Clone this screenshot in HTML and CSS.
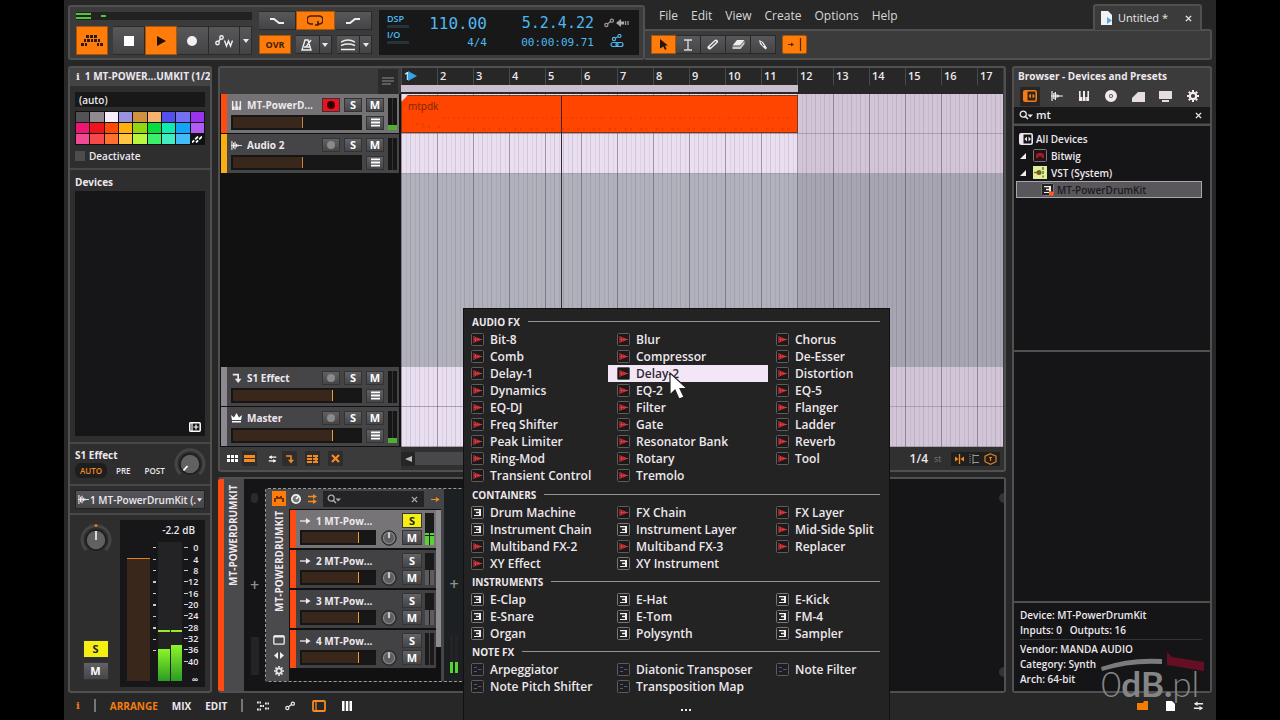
FILE: index.html
```html
<!DOCTYPE html>
<html lang="en">
<head>
<meta charset="utf-8">
<title>Untitled *</title>
<link rel="stylesheet" href="styles.css">
</head>
<body>
<svg class="defs" aria-hidden="true">
  <symbol id="fx" viewBox="0 0 13 13"><rect x=".5" y=".5" width="12" height="12" rx="1" fill="#1b1919" stroke="#5d5d5d"/><path d="M3 3v7M4.5 4v5M6 4.2v4.6M7.3 5v3M8.6 5.6v1.8" stroke="#d8343a" stroke-width="1.1"/><path d="M3 6.5h8" stroke="#d8343a"/></symbol>
  <symbol id="ins" viewBox="0 0 13 13"><rect x=".5" y=".5" width="12" height="12" rx="1" fill="#222" stroke="#777"/><path d="M3 3h7v7H3V8.9h5V7.3H5V5.8h3V4.2H3z" fill="#f3edf3"/></symbol>
  <symbol id="note" viewBox="0 0 13 13"><rect x=".5" y=".5" width="12" height="12" rx="1" fill="#1e1e20" stroke="#5c5c60"/><path d="M3 4.5h3M3 8.5h3M7 6.5h3.5" stroke="#55597a" stroke-width="1.2"/></symbol>
  <symbol id="wave" viewBox="0 0 12 12"><path d="M1 1v10M2.8 3v6M4.4 2v8M6 4.2v3.6M7.6 5v2" stroke="currentColor" stroke-width="1.2"/><path d="M0 6h12" stroke="currentColor"/></symbol>
  <symbol id="keys" viewBox="0 0 12 12"><path d="M1 1h1.6v6H4v4H1zM5 1v6H4.6v4h3V7H7V1zM9.4 1H11v10H8.2V7h1.2z" fill="currentColor"/></symbol>
  <symbol id="gear" viewBox="0 0 12 12"><circle cx="6" cy="6" r="3.2" fill="none" stroke="currentColor" stroke-width="2.2"/><path d="M6 0v2M6 10v2M0 6h2M10 6h2M1.8 1.8l1.4 1.4M8.8 8.8l1.4 1.4M10.2 1.8L8.8 3.2M3.2 8.8l-1.4 1.4" stroke="currentColor" stroke-width="2"/></symbol>
  <symbol id="search" viewBox="0 0 14 10"><circle cx="4.2" cy="4.2" r="3" fill="none" stroke="currentColor" stroke-width="1.3"/><path d="M6.2 6.2L9 9" stroke="currentColor" stroke-width="1.5"/><path d="M8.5 4.5H14L11.2 7.5z" fill="currentColor"/></symbol>
  <symbol id="x" viewBox="0 0 8 8"><path d="M1 1l6 6M7 1L1 7" stroke="currentColor" stroke-width="1.6"/></symbol>
  <symbol id="down" viewBox="0 0 6 4"><path d="M0 0h6L3 4z" fill="currentColor"/></symbol>
  <symbol id="list" viewBox="0 0 10 10"><path d="M0 1.5h10M0 5h10M0 8.5h10" stroke="currentColor" stroke-width="2"/></symbol>
  <symbol id="send" viewBox="0 0 12 12"><path d="M1.5 2H8v7" fill="none" stroke="currentColor" stroke-width="2"/><path d="M4 7h8l-4 5z" fill="currentColor"/></symbol>
  <symbol id="arrow" viewBox="0 0 12 8"><path d="M0 4h8" stroke="currentColor" stroke-width="1.4"/><path d="M6.500 .8L11.500 4l-5 3.200z" fill="currentColor"/></symbol>
  <symbol id="swap" viewBox="0 0 12 10"><path d="M2 2.500h9M1 7.500h9" stroke="currentColor" stroke-width="1.600"/><path d="M5 0v5L1 2.500zM7 5v5l4-2.500z" fill="currentColor"/></symbol>
  <symbol id="link" viewBox="0 0 14 12"><circle cx="3" cy="8.500" r="2" fill="none" stroke="currentColor" stroke-width="1.600"/><circle cx="10" cy="3" r="2" fill="none" stroke="currentColor" stroke-width="1.600"/><path d="M4.500 7l4-2.800" stroke="currentColor" stroke-width="1.600"/></symbol>
  <symbol id="device" viewBox="0 0 14 12"><rect x=".8" y=".8" width="12.400" height="10.400" rx="1.500" fill="none" stroke="currentColor" stroke-width="1.600"/><path d="M1 1h3.500v10H1zM5.500 6L8 3.500v5zM12 6L9.500 3.500v5z" fill="currentColor"/></symbol>
  <symbol id="knob" viewBox="0 0 32 32"><path d="M6.500 27a14 14 0 1 1 19 0" fill="none" stroke="#454545" stroke-width="3"/><circle cx="16" cy="17" r="10" fill="#606163" stroke="#1d1d1d" stroke-width="1.500"/></symbol>
  <symbol id="pan" viewBox="0 0 16 16"><circle cx="8" cy="8" r="7.200" fill="#5e5d60" stroke="#1c1c1c"/><circle cx="8" cy="8" r="5.500" fill="none" stroke="#8a898c"/><path d="M8 2.500V8" stroke="#fff" stroke-width="1.400"/></symbol>
</svg>

<div class="app">
<header class="top">
  <section class="panel transport" aria-label="Transport">
    <div class="play-side">
      <div class="master-level"><i></i><b></b></div>
      <div class="btns big">
        <button class="on logo" aria-label="Engine"><svg width="22" height="12" viewBox="0 0 22 12" fill="#2a1a08"><path d="M5 0h3v3H5zM9 0h3v3H9zM13 0h3v3h-3zM3 4h2v3H3zM6 4h3v3H6zM10 4h2v3h-2zM13 4h3v3h-3zM17 4h2v3h-2zM0 8h3v3H0zM4 8h2v3H4zM16 8h2v3h-2zM19 8h3v3h-3z"/></svg></button>
        <button aria-label="Stop"><svg width="10" height="10"><path d="M0 0h10v10H0z" fill="#fff"/></svg></button>
        <button class="on" aria-label="Play"><svg width="10" height="10"><path d="M1 0l9 5-9 5z" fill="#1e1206"/></svg></button>
        <button aria-label="Record"><svg width="10" height="10"><circle cx="5" cy="5" r="5" fill="#f3eef3"/></svg></button>
        <button aria-label="Write automation"><svg width="18" height="14" viewBox="0 0 18 14" fill="none" stroke="#f3eef3" stroke-width="1.400"><circle cx="2.500" cy="9" r="1.700"/><circle cx="6.500" cy="3.500" r="1.700"/><path d="M3.500 7.500l2-2.500M9.500 6.500l2 5.500 2-5 2 5 2-5.500"/></svg></button>
        <button class="dd" aria-label="Automation options"><svg width="6" height="4"><use href="#down"/></svg></button>
      </div>
    </div>
    <div class="loop-side">
      <div class="btns">
        <button aria-label="Punch in"><svg width="14" height="6" fill="none" stroke="#eee" stroke-width="2"><path d="M0 1h4l5 4h5"/></svg></button>
        <button class="on" aria-label="Loop"><svg width="16" height="11" viewBox="0 0 16 11" fill="none" stroke="#3a2208" stroke-width="1.600"><path d="M6 9H4a3.500 3.500 0 0 1 0-8h8a3.500 3.500 0 0 1 0 8h-2M11 6v4H8"/></svg></button>
        <button aria-label="Punch out"><svg width="14" height="6" fill="none" stroke="#eee" stroke-width="2"><path d="M0 5h4l5-4h5"/></svg></button>
      </div>
      <div class="btns split">
        <button class="on ovr">OVR</button>
        <button aria-label="Metronome"><svg width="12" height="12" viewBox="0 0 12 12" fill="none" stroke="#eee" stroke-width="1.400"><path d="M4 1h3l3 10H1zM3 8h6M5 8l5-7"/></svg></button>
        <button class="dd" aria-label="Metronome options"><svg width="6" height="4"><use href="#down"/></svg></button>
        <button aria-label="Groove"><svg width="14" height="12" viewBox="0 0 14 12" fill="none" stroke="#eee" stroke-width="1.500"><path d="M0 3q7-4 14 0M0 6.500q7-3 14 0M0 10.500h14"/></svg></button>
        <button class="dd" aria-label="Groove options"><svg width="6" height="4"><use href="#down"/></svg></button>
      </div>
    </div>
    <div class="display">
      <div class="dsp"><span>DSP</span><i></i><span>I/O</span><i></i></div>
      <div class="nums"><span class="tempo">110.00</span><span>4/4</span></div>
      <div class="nums"><span class="pos">5.2.4.22</span><span>00:00:09.71</span></div>
      <div class="flags">
        <svg width="26" height="12" viewBox="0 0 26 12" color="#9a9a9a"><use href="#link" width="11" height="12"/><path d="M12 6l5-4v2.500h3v3h-3V10z" fill="#aaa"/><path d="M21.500 4v4M24 4v4" stroke="#999" stroke-width="1.300"/></svg>
        <svg width="14" height="14" viewBox="0 0 14 14" fill="none" stroke="#4fb8f0" stroke-width="1.200"><circle cx="4" cy="5" r="1.600"/><circle cx="9.500" cy="2" r="1.500"/><path d="M5.500 4l2.500-1.300"/><rect x="1" y="8.500" width="7" height="4" rx="2"/><rect x="6" y="8.500" width="7" height="4" rx="2"/></svg>
      </div>
    </div>
  </section>
  <div class="top-right">
    <div class="menu-row">
      <nav class="menubar"><button>File</button><button>Edit</button><button>View</button><button>Create</button><button>Options</button><button>Help</button></nav>
      <div class="tab"><svg width="13" height="14" viewBox="0 0 13 14"><path d="M1 0h7l4 4v10H1z" fill="#f1f3f8"/><path d="M7 6l5 3.500L7 13z" fill="#58a9dd"/></svg><span>Untitled *</span><button aria-label="Close tab"><svg width="7" height="7"><use href="#x"/></svg></button></div>
    </div>
    <div class="tools">
      <div class="btns">
        <button class="on" aria-label="Pointer"><svg width="8" height="11"><path d="M0 0l8 6.500H5L6.500 10 5 11 3.300 7.500 0 9.500z" fill="#22150a"/></svg></button>
        <button aria-label="Time selection"><svg width="8" height="12" fill="none" stroke="#ddd" stroke-width="1.300"><path d="M0 1h8M0 11h8M4 1v10"/></svg></button>
        <button aria-label="Pencil"><svg width="12" height="11" viewBox="0 0 12 11"><path d="M2.500 8.500L9 2.500" stroke="#eee" stroke-width="4" stroke-linecap="round"/><path d="M3 8l6-5.500" stroke="#555" stroke-width="1.300"/></svg></button>
        <button aria-label="Eraser"><svg width="13" height="11" viewBox="0 0 13 11"><path d="M5 1h7.500L8 6.500H.5z" fill="#eee"/><path d="M.5 7.500H8l4.500-5.500v3L8.500 10h-8z" fill="#c9c9c9"/></svg></button>
        <button aria-label="Knife"><svg width="10" height="11" viewBox="0 0 10 11"><path d="M1 1l4 2 4 6-1.500 1.500L2 5z" fill="#eee"/><path d="M3 3l2.500 4" stroke="#444"/></svg></button>
      </div>
      <button class="on follow" aria-label="Follow playback"><svg width="16" height="13" viewBox="0 0 16 13"><path d="M1 6.500h4M13.500 0v13" stroke="#4a2808" stroke-width="1.200"/><path d="M4 4.500l3 2-3 2z" fill="#4a2808"/></svg></button>
    </div>
  </div>
</header>

<main class="work">
  <aside class="panel inspector">
    <h2><b class="info">i</b>1 MT-POWER...UMKIT (1/2</h2>
    <section class="ident">
      <input class="name" type="text" value="(auto)" aria-label="Track name">
      <div class="palette">
        <i class="c1"></i><i class="c2"></i><i class="c3"></i><i class="c4"></i><i class="c5"></i><i class="c6"></i><i class="c7"></i><i class="c8"></i><i class="c9"></i>
        <i class="c10"></i><i class="c11"></i><i class="c12"></i><i class="c13"></i><i class="c14"></i><i class="c15"></i><i class="c16"></i><i class="c17"></i><i class="c18"></i>
        <i class="c19"></i><i class="c20"></i><i class="c21"></i><i class="c22"></i><i class="c23"></i><i class="c24"></i><i class="c25"></i><i class="c26"></i><i class="c27"><svg width="10" height="7" viewBox="0 0 10 7"><path d="M0 6.500L6 .5M4 6.500L10 .5" stroke="#fff" stroke-width="1.800" stroke-dasharray="3 1.500 6"/></svg></i>
      </div>
      <label class="deact"><input type="checkbox">Deactivate</label>
    </section>
    <section class="devs">
      <h3>Devices</h3>
      <div class="well"><button aria-label="Add device"><svg width="12" height="10" viewBox="0 0 12 10"><rect x=".8" y=".8" width="10.400" height="8.400" rx="1" fill="none" stroke="#fff" stroke-width="1.500"/><path d="M1 1h2v8H1zM4.500 5h5M7 2.500v5" stroke="#fff" stroke-width="1.200"/></svg></button></div>
    </section>
    <section class="sends">
      <div><h3>S1 Effect</h3><div class="modes"><button class="sel">AUTO</button><button>PRE</button><button>POST</button></div></div>
      <svg width="32" height="32" viewBox="0 0 32 32"><use href="#knob"/><path d="M9.500 23.500l4-4.500" stroke="#fff" stroke-width="1.800"/></svg>
    </section>
    <section class="route"><button><svg width="11" height="11"><use href="#wave"/></svg><span>1 MT-PowerDrumKit (.</span><svg width="5" height="4"><use href="#down"/></svg></button></section>
    <section class="mix">
      <div class="strip">
        <svg width="32" height="32" viewBox="0 0 32 32"><use href="#knob"/><path d="M16 8v9" stroke="#fff" stroke-width="1.500"/><circle cx="16" cy="2.500" r="1.500" fill="#d67a2c"/></svg>
        <div class="sm"><button class="solo">S</button><button>M</button></div>
      </div>
      <div class="meterbox">
        <span class="db">-2.2 dB</span>
        <div class="cols">
          <div class="fader"></div>
          <div class="ticks"></div>
          <div class="lv"><i class="l"></i><i class="r"></i></div>
          <ul><li>0</li><li>4</li><li>8</li><li>12</li><li>16</li><li>20</li><li>24</li><li>28</li><li>32</li><li>36</li><li>40</li><li class="inf">∞</li></ul>
        </div>
      </div>
    </section>
  </aside>

  <div class="centre">
    <section class="panel arranger">
      <div class="corner"><button aria-label="Track list options"><svg width="12" height="12" viewBox="0 0 12 12"><path d="M0 2h12M0 5h12M0 8h9" stroke="#5c5c5c" stroke-width="2"/></svg></button></div>
      <div class="ruler">
        <div class="nos"><span>1</span><span>2</span><span>3</span><span>4</span><span>5</span><span>6</span><span>7</span><span>8</span><span>9</span><span>10</span><span>11</span><span>12</span><span>13</span><span>14</span><span>15</span><span>16</span><span>17</span></div>
        <div class="loopbar"></div>
        <svg class="startmark" width="9" height="10"><path d="M0 0l9 5-9 5z" fill="#35a3e6"/></svg>
      </div>
      <div class="heads">
        <article class="track t-inst">
          <div class="tname"><svg width="11" height="11"><use href="#keys"/></svg><span>MT-PowerD...</span></div>
          <button class="arm live" aria-label="Arm"><i></i></button><button>S</button><button>M</button>
          <div class="vol v52"></div><button class="lst" aria-label="Options"><svg width="9" height="9"><use href="#list"/></svg></button><div class="lvl hot"></div>
        </article>
        <article class="track t-audio">
          <div class="tname"><svg width="11" height="11"><use href="#wave"/></svg><span>Audio 2</span></div>
          <button class="arm" aria-label="Arm"><i></i></button><button>S</button><button>M</button>
          <div class="vol v52"></div><button class="lst" aria-label="Options"><svg width="9" height="9"><use href="#list"/></svg></button><div class="lvl"></div>
        </article>
        <div class="void"></div>
        <article class="track t-bus">
          <div class="tname"><svg width="11" height="10"><use href="#send"/></svg><span>S1 Effect</span></div>
          <button class="arm" aria-label="Arm"><i></i></button><button>S</button><button>M</button>
          <div class="vol v77"></div><button class="lst" aria-label="Options"><svg width="9" height="9"><use href="#list"/></svg></button><div class="lvl"></div>
        </article>
        <article class="track t-bus">
          <div class="tname"><svg width="11" height="10" viewBox="0 0 11 10"><path d="M0 2l3 2.500L5.500 0 8 4.500 11 2l-1 5H1zM1 8h9v1.500H1z" fill="#fff"/></svg><span>Master</span></div>
          <button class="arm" aria-label="Arm"><i></i></button><button>S</button><button>M</button>
          <div class="vol v77"></div><button class="lst" aria-label="Options"><svg width="9" height="9"><use href="#list"/></svg></button><div class="lvl hot"></div>
        </article>
      </div>
      <div class="lanes">
        <div class="lane"><div class="clip"><span>mtpdk</span><svg viewBox="0 0 396 14" preserveAspectRatio="none"><path d="M36 2H396" stroke="#d03c06" stroke-dasharray="2 3 1 4"/><path d="M8 8h10M14 11h20M60 13h330" stroke="#d03c06" stroke-dasharray="3 3 2 8"/></svg></div></div>
        <div class="lane"></div>
        <div class="gap"></div>
        <div class="lane"></div>
        <div class="lane"></div>
        <div class="playhead"></div>
      </div>
      <div class="views">
        <button class="plain" aria-label="Clip launcher"><svg width="11" height="7" viewBox="0 0 11 7"><path d="M0 0h3v3H0zM4 0h3v3H4zM8 0h3v3H8zM0 4h3v3H0zM4 4h3v3H4zM8 4h3v3H8z" fill="#fff"/></svg></button>
        <button aria-label="Arranger timeline"><svg width="11" height="8"><path d="M0 0h11v3H0zM0 4h11v3H0z" fill="#f58a1f"/></svg></button>
        <button class="plain gapl" aria-label="Input output"><svg width="9" height="8"><use href="#swap"/></svg></button>
        <button aria-label="Effect tracks"><svg width="9" height="10"><use href="#send"/></svg></button>
        <button class="gapl" aria-label="Track height"><svg width="11" height="8" viewBox="0 0 11 8"><path d="M0 1h5M0 4h5M0 7h5M6 1h5M6 4h5M6 7h5M9 0v8" stroke="#f58a1f" stroke-width="1.800"/></svg></button>
        <button class="gapl" aria-label="Deactivated tracks"><svg width="9" height="9" viewBox="0 0 9 9"><path d="M1 1l7 7M8 1L1 8" stroke="#f58a1f" stroke-width="2.200"/></svg></button>
      </div>
      <div class="scroller">
        <button aria-label="Scroll left"><svg width="7" height="6"><path d="M7 0v6L0 3z" fill="#bbb"/></svg></button><i></i>
        <span class="snap">1/4</span><em>st</em>
        <div class="snapset"><svg width="11" height="10" viewBox="0 0 11 10"><path d="M5.500 0v10" stroke="#f58a1f" stroke-width="1.300"/><path d="M1 2.500v5L4.500 5zM10 2.500v5L6.500 5z" fill="#f58a1f"/></svg><svg width="11" height="10" viewBox="0 0 11 10" fill="none" stroke="#999"><path d="M1 0v10" stroke-dasharray="1 1"/><path d="M4 0v10M10 1.500H4M10 8.500H4"/></svg><svg width="13" height="12" viewBox="0 0 13 12" fill="none" stroke="#e27e22" stroke-width="1.200"><path d="M6.500 .7l5.500 2.500v5.500l-5.500 2.600L1 8.700V3.200zM5 4.500h3M6.500 4.500v3.500"/></svg></div>
      </div>
    </section>

    <section class="panel devices">
      <h2 class="vert outer">MT-POWERDRUMKIT</h2>
      <div class="rack">
        <div class="slot"><i class="dot"></i><button class="plus" aria-label="Insert device">+</button><div class="io"></div></div>
        <article class="device">
          <div class="side">
            <button class="on" aria-label="Device on"><svg width="10" height="6" viewBox="0 0 10 6" fill="none" stroke="#3a1d04" stroke-width="1.500"><path d="M1 6V2M3 3V0M5 3V1M7 3V0M9 6V2"/></svg></button>
            <h3 class="vert">MT-POWERDRUMKIT</h3>
            <svg width="12" height="10" viewBox="0 0 12 10"><rect x=".8" y=".8" width="10.400" height="8.400" rx="1" fill="none" stroke="#eee" stroke-width="1.300"/><path d="M1 1.500h10" stroke="#eee" stroke-width="2"/></svg>
            <svg width="10" height="7"><path d="M0 3.500L4 0v7zM10 3.500L6 0v7z" fill="#eee"/></svg>
            <svg width="10" height="10"><use href="#gear"/></svg>
          </div>
          <div class="body">
            <div class="dbar">
              <svg width="12" height="12"><circle cx="6" cy="6" r="4.200" fill="#777" stroke="#eee" stroke-width="1.700"/><path d="M6 6l3-3" stroke="#fff" stroke-width="1.500"/></svg>
              <svg class="org" width="9" height="10" viewBox="0 0 9 10"><path d="M0 2.500h6M0 7.500h6" stroke="#f58a1f" stroke-width="1.400"/><path d="M5 0l4 2.500L5 5zM5 5l4 2.500L5 10z" fill="#f58a1f"/></svg>
              <div class="find"><svg width="14" height="10"><use href="#search"/></svg><svg width="7" height="7"><use href="#x"/></svg></div>
              <svg class="org" width="9" height="7"><use href="#arrow"/></svg>
            </div>
            <div class="chains">
              <div class="list">
                <div class="chain cur"><svg width="11" height="8"><use href="#arrow"/></svg><span>1 MT-Pow...</span><button class="solo">S</button><div class="lvl2 hot"></div><div class="vol v77"></div><svg class="k" width="16" height="16"><use href="#pan"/></svg><button>M</button></div>
                <div class="chain"><svg width="11" height="8"><use href="#arrow"/></svg><span>2 MT-Pow...</span><button>S</button><div class="lvl2 mid"></div><div class="vol v77"></div><svg class="k" width="16" height="16"><use href="#pan"/></svg><button>M</button></div>
                <div class="chain"><svg width="11" height="8"><use href="#arrow"/></svg><span>3 MT-Pow...</span><button>S</button><div class="lvl2 mid"></div><div class="vol v77"></div><svg class="k" width="16" height="16"><use href="#pan"/></svg><button>M</button></div>
                <div class="chain"><svg width="11" height="8"><use href="#arrow"/></svg><span>4 MT-Pow...</span><button>S</button><div class="lvl2"></div><div class="vol v77"></div><svg class="k" width="16" height="16"><use href="#pan"/></svg><button>M</button></div>
              </div>
              <div class="sbar"></div>
            </div>
          </div>
          <div class="tail"><button class="plus" aria-label="Insert device in chain">+</button><div class="io hot"></div></div>
        </article>
        <div class="ends"><i></i><i></i></div>
      </div>
    </section>
  </div>

  <aside class="panel browser">
    <h2>Browser - Devices and Presets</h2>
    <nav>
      <button class="cur" aria-label="Devices"><svg width="14" height="12"><use href="#device"/></svg></button>
      <button aria-label="Samples"><svg width="12" height="12"><use href="#wave"/></svg></button>
      <button aria-label="Instruments"><svg width="12" height="12"><use href="#keys"/></svg></button>
      <button aria-label="Multisamples"><svg width="12" height="12"><circle cx="6" cy="6" r="4" fill="#555" stroke="#f3e9ee" stroke-width="4"/><circle cx="6" cy="6" r="1" fill="#fff"/></svg></button>
      <button aria-label="Clips"><svg width="13" height="11"><path d="M0 11V7l6-6h7v10z" fill="#e5dde2"/></svg></button>
      <button aria-label="Files"><svg width="13" height="11"><path d="M0 0h13v8H0zM3 9h7v2H3z" fill="#e5dde2"/></svg></button>
      <button aria-label="Settings"><svg width="12" height="12"><use href="#gear"/></svg></button>
    </nav>
    <div class="query"><svg width="14" height="10"><use href="#search"/></svg><input type="text" value="mt" aria-label="Search"><button aria-label="Clear"><svg width="7" height="7"><use href="#x"/></svg></button></div>
    <ul class="tree">
      <li><svg width="14" height="12"><use href="#device"/></svg>All Devices</li>
      <li class="n1"><svg class="open" width="6" height="6"><path d="M6 0v6H0z" fill="#eee"/></svg><svg width="14" height="13" viewBox="0 0 14 13"><rect x=".5" y=".5" width="13" height="12" rx="1" fill="#241416" stroke="#777"/><path d="M3 9V6l2-2h4l2 2v3H9V7.500H5V9z" fill="#a8182b"/></svg>Bitwig</li>
      <li class="n1"><svg class="open" width="6" height="6"><path d="M6 0v6H0z" fill="#eee"/></svg><svg width="14" height="13" viewBox="0 0 14 13"><path d="M0 0h14v13H0z" fill="#dff09a"/><path d="M1 6.500h5M10 1v3M10 5v3M10 9.500v2" stroke="#6c7b2a" stroke-width="1.500"/><circle cx="6" cy="6.500" r="2.500" fill="#7a5a20"/></svg>VST (System)</li>
      <li class="n2 cur"><svg width="13" height="13" viewBox="0 0 13 13"><use href="#ins"/><path d="M8 8l5 1-1 4-4-1z" fill="#ff5a1a"/></svg>MT-PowerDrumKit</li>
    </ul>
    <div class="blank"></div>
    <div class="meta">
      <p>Device: MT-PowerDrumKit</p><p>Inputs: 0 &nbsp; Outputs: 16</p>
      <hr>
      <p>Vendor: MANDA AUDIO</p><p>Category: Synth</p><p>Arch: 64-bit</p>
    </div>
  </aside>
</main>

<footer class="foot">
  <button class="hi info">i</button><i></i>
  <nav><button class="hi">ARRANGE</button><button>MIX</button><button>EDIT</button></nav><i></i>
  <div class="fi">
    <svg width="12" height="10" viewBox="0 0 12 10"><path d="M0 1.500h4M3 5h4M0 8.500h4M8 2.500h4M8 7.500h4" stroke="#eee" stroke-width="1.800" stroke-dasharray="1.800 .7"/></svg>
    <svg width="11" height="10"><use href="#link"/></svg>
    <svg class="org" width="14" height="12" viewBox="0 0 14 12"><rect x="1" y="1" width="12" height="10" rx="1" fill="none" stroke="currentColor" stroke-width="1.800"/><path d="M4 1v10" stroke="currentColor" stroke-width="1.300"/></svg>
    <svg width="10" height="10"><path d="M0 0h2.500v10H0zM3.800 0h2.500v10H3.800zM7.500 0H10v10H7.500z" fill="#fff"/></svg>
  </div>
  <div class="fr">
    <svg width="11" height="9"><path d="M0 2h6l1-2h4v9H0z" fill="#f57c00"/></svg>
    <svg width="9" height="10"><path d="M0 0h6l3 3v7H0z" fill="#fff"/></svg>
    <svg width="11" height="10"><use href="#swap"/></svg>
  </div>
</footer>

<div class="mark"><svg width="104" height="20" viewBox="0 0 104 20"><path d="M0 15Q28 5 61 7v5Q30 10 1 19z" fill="#7b7b7b"/><path d="M66 0l5 5 32 5v9l-37-6z" fill="#650f25"/></svg><p><span>0</span><b>dB.</b><span>pl</span></p></div>

<div class="popup" role="menu">
  <h4>AUDIO FX</h4>
  <div class="items">
    <button><svg><use href="#fx"/></svg>Bit-8</button><button><svg><use href="#fx"/></svg>Blur</button><button><svg><use href="#fx"/></svg>Chorus</button>
    <button><svg><use href="#fx"/></svg>Comb</button><button><svg><use href="#fx"/></svg>Compressor</button><button><svg><use href="#fx"/></svg>De-Esser</button>
    <button><svg><use href="#fx"/></svg>Delay-1</button><button class="cur"><svg><use href="#fx"/></svg>Delay-2</button><button><svg><use href="#fx"/></svg>Distortion</button>
    <button><svg><use href="#fx"/></svg>Dynamics</button><button><svg><use href="#fx"/></svg>EQ-2</button><button><svg><use href="#fx"/></svg>EQ-5</button>
    <button><svg><use href="#fx"/></svg>EQ-DJ</button><button><svg><use href="#fx"/></svg>Filter</button><button><svg><use href="#fx"/></svg>Flanger</button>
    <button><svg><use href="#fx"/></svg>Freq Shifter</button><button><svg><use href="#fx"/></svg>Gate</button><button><svg><use href="#fx"/></svg>Ladder</button>
    <button><svg><use href="#fx"/></svg>Peak Limiter</button><button><svg><use href="#fx"/></svg>Resonator Bank</button><button><svg><use href="#fx"/></svg>Reverb</button>
    <button><svg><use href="#fx"/></svg>Ring-Mod</button><button><svg><use href="#fx"/></svg>Rotary</button><button><svg><use href="#fx"/></svg>Tool</button>
    <button><svg><use href="#fx"/></svg>Transient Control</button><button><svg><use href="#fx"/></svg>Tremolo</button>
  </div>
  <h4>CONTAINERS</h4>
  <div class="items">
    <button><svg><use href="#ins"/></svg>Drum Machine</button><button><svg><use href="#fx"/></svg>FX Chain</button><button><svg><use href="#fx"/></svg>FX Layer</button>
    <button><svg><use href="#ins"/></svg>Instrument Chain</button><button><svg><use href="#ins"/></svg>Instrument Layer</button><button><svg><use href="#fx"/></svg>Mid-Side Split</button>
    <button><svg><use href="#fx"/></svg>Multiband FX-2</button><button><svg><use href="#fx"/></svg>Multiband FX-3</button><button><svg><use href="#fx"/></svg>Replacer</button>
    <button><svg><use href="#fx"/></svg>XY Effect</button><button><svg><use href="#ins"/></svg>XY Instrument</button>
  </div>
  <h4>INSTRUMENTS</h4>
  <div class="items">
    <button><svg><use href="#ins"/></svg>E-Clap</button><button><svg><use href="#ins"/></svg>E-Hat</button><button><svg><use href="#ins"/></svg>E-Kick</button>
    <button><svg><use href="#ins"/></svg>E-Snare</button><button><svg><use href="#ins"/></svg>E-Tom</button><button><svg><use href="#ins"/></svg>FM-4</button>
    <button><svg><use href="#ins"/></svg>Organ</button><button><svg><use href="#ins"/></svg>Polysynth</button><button><svg><use href="#ins"/></svg>Sampler</button>
  </div>
  <h4>NOTE FX</h4>
  <div class="items">
    <button><svg><use href="#note"/></svg>Arpeggiator</button><button><svg><use href="#note"/></svg>Diatonic Transposer</button><button><svg><use href="#note"/></svg>Note Filter</button>
    <button><svg><use href="#note"/></svg>Note Pitch Shifter</button><button><svg><use href="#note"/></svg>Transposition Map</button>
  </div>
  <button class="more" aria-label="More"><svg width="10" height="2"><path d="M0 0h2v2H0zM4 0h2v2H4zM8 0h2v2H8z" fill="#eee"/></svg></button>
</div>
<svg class="cursor" width="18" height="30" viewBox="0 0 18 30"><path d="M1 1v22l5-5 4 9 5-2-4-8.500h7z" fill="#fff" stroke="#222" stroke-width="1.200"/></svg>
</div>
</body>
</html>
```

FILE: styles.css
```css
* { box-sizing: border-box; }
body { margin: 0; background: #000; color: #eee8ee; font: 600 10px/16px "Open Sans", "Noto Sans", sans-serif; }
h2, h3, h4, p, ul { margin: 0; padding: 0; font-size: 10px; list-style: none; }
h2, h3 { font-weight: 700; }
button, input { font: inherit; color: inherit; margin: 0; padding: 0; border: 0; background: none; }
button { display: flex; align-items: center; justify-content: center; }
svg { display: block; flex: none; }
.defs { position: absolute; width: 0; height: 0; }
.org { color: #f58a1f; }

.app { position: relative; display: flex; flex-direction: column; min-height: 100vh; margin: 0 5%; padding: 5px 4px 0; background: #272727; overflow: hidden; }
.panel { border: 2px solid #505050; border-radius: 3px; background: #3b3b3b; }

/* Header */
.top { display: grid; grid-template-columns: 577px 1fr; height: 55px; }
.transport { display: flex; gap: 7px; padding: 3px 4px 3px 6px; }
.play-side { width: 176px; display: flex; flex-direction: column; justify-content: space-between; }
.loop-side { width: 113px; display: flex; flex-direction: column; justify-content: space-between; padding: 1px 0; }
.master-level { height: 8px; margin-top: 2px; background: #222; display: flex; gap: 10px; align-items: center; }
.master-level i { width: 15px; height: 6px; border: solid #55c238; border-width: 2px 0; }
.master-level b { width: 5px; height: 2px; background: #55c238; }
.btns { display: flex; }
.btns button { flex: 1; height: 19px; background: linear-gradient(#58585b, #444447); border: 1px solid #2a2a2a; border-left-width: 0; }
.btns.big button { height: 29px; }
.btns.big .logo { margin-right: 5px; }
.btns .dd { flex: 0 0 12px; }
.btns .on, .follow { background: #ff7b0a !important; color: #3a2208; border: 1px solid #a85409; }
.btns .ovr { flex: 0 0 32px; margin-right: 5px; font: 700 9px/16px "Open Sans", sans-serif; }
.btns.split .dd:nth-child(3) { margin-right: 5px; }
.display { flex: 1; display: grid; grid-template-columns: 34px 66px 107px 1fr; padding: 3px 8px 0; background: #181819; color: #4fb8f0; }
.dsp { font-size: 9px; line-height: 12px; }
.dsp span { display: block; }
.dsp i { display: block; height: 3px; width: 22px; margin-bottom: 1px; background: #24323c; }
.nums { display: flex; flex-direction: column; align-items: flex-end; font: 11px/18px "DejaVu Sans Mono", monospace; }
.nums .tempo, .nums .pos { font-size: 16px; line-height: 21px; }
.nums .pos { font-size: 15px; }
.flags { display: flex; flex-direction: column; align-items: center; gap: 5px; padding: 4px 0 0 8px; }
.top-right { display: flex; flex-direction: column; }
.menu-row { display: flex; justify-content: space-between; height: 24px; }
.menubar { display: flex; gap: 13px; padding-left: 14px; font-size: 12px; font-weight: 400; color: #d8d8d8; height: 22px; }
.tab { display: flex; align-items: center; width: 109px; height: 26px; margin-right: 10px; padding: 0 8px 0 5px; gap: 5px; background: #3b3b3b; border: 2px solid #505050; border-bottom: 0; border-radius: 3px 3px 0 0; z-index: 1; margin-top: -1px; font-size: 11px; font-weight: 400; }
.tab span { flex: 1; }
.tools { flex: 1; display: flex; gap: 6px; align-items: flex-start; padding: 4px 6px; background: #3b3b3b; border: 2px solid #505050; border-left: 0; border-radius: 0 3px 3px 0; }
.tools .btns button { width: 25px; flex: none; }
.follow { width: 25px; height: 19px; border-radius: 2px; }

/* Work area */
.work { flex: 1; display: grid; grid-template-columns: 144px minmax(0, 1fr) 200px; gap: 6px; padding: 6px 0 0; }
.inspector { display: flex; flex-direction: column; background: #2e2e2e; overflow: hidden; }
.inspector h2 { height: 18px; padding-left: 6px; background: #434346; white-space: nowrap; overflow: hidden; line-height: 17px; }
.info { font-family: "DejaVu Serif", serif; font-weight: 700; }
h2 .info { margin-right: 5px; }
.inspector section { border-bottom: 2px solid #484848; padding: 6px 5px; }
.name { display: block; width: 100%; height: 15px; padding: 0 4px; background: #181818; }
.palette { display: grid; grid-template-columns: repeat(9, 1fr); grid-auto-rows: 10px; gap: 1px; margin-top: 4px; padding: 1px; background: #111; }
.palette i { display: grid; place-items: center; }
.c1 { background: #555256; } .c2 { background: #918b91; } .c3 { background: #f6effb; } .c4 { background: #9a93e2; } .c5 { background: #cf923f; } .c6 { background: #f7b36f; } .c7 { background: #5450ee; } .c8 { background: #756ff2; } .c9 { background: #9a33f0; }
.c10 { background: #ee1672; } .c11 { background: #f2121c; } .c12 { background: #ff4a08; } .c13 { background: #ffb00d; } .c14 { background: #92d80c; } .c15 { background: #0bdc3e; } .c16 { background: #10eab0; } .c17 { background: #12a4f6; } .c18 { background: #b25af4; }
.c19 { background: #f04a92; } .c20 { background: #f9484c; } .c21 { background: #ff7030; } .c22 { background: #ffc440; } .c23 { background: #b9f63e; } .c24 { background: #3cef6a; } .c25 { background: #41eec4; } .c26 { background: #41bcf8; } .c27 { background: #111; }
.deact { display: flex; align-items: center; gap: 4px; margin-top: 3px; }
.deact input { appearance: none; width: 10px; height: 10px; background: #4c4c4e; }
.inspector .ident { padding-bottom: 4px; }
.inspector .devs { flex: 1; display: flex; flex-direction: column; padding-top: 4px; }
.well { flex: 1; margin-top: 1px; background: #161618; display: flex; align-items: flex-end; justify-content: flex-end; padding: 4px; }
.inspector .sends { display: flex; justify-content: space-between; height: 42px; padding: 3px 4px 2px 5px; }
.modes { display: flex; gap: 4px; font-size: 8px; }
.modes button { padding: 0 5px; height: 15px; border-radius: 6px; }
.modes .sel { background: #1e1e1e; color: #f58a1f; }
.inspector .route { padding: 4px 5px; height: 29px; }
.route button { width: 100%; height: 19px; gap: 1px; padding: 0 2px; background: linear-gradient(#55555a, #454548); border: 1px solid #222; }
.route span { flex: 1; white-space: nowrap; overflow: hidden; text-align: left; }
.inspector .mix { display: flex; justify-content: space-between; padding: 5px 5px 4px; border: 0; }
.strip { width: 41px; display: flex; flex-direction: column; align-items: center; justify-content: space-between; padding: 3px 0 7px; }
.sm { display: grid; gap: 4px; }
.sm button, .chain button, .track button { background: linear-gradient(#626265, #454547); border: 1px solid #333; color: #fff; font-weight: 700; }
.sm button { width: 26px; height: 18px; font-size: 11px; }
.sm button.solo, .chain button.solo { background: #f4ee14; color: #222; }
.meterbox { width: 85px; height: 167px; padding: 2px 4px 0 7px; background: #17171a; }
.db { display: block; padding-right: 6px; text-align: right; height: 20px; }
.cols { display: grid; grid-template-columns: 23px 8px 24px 1fr; height: 143px; }
.fader { background: linear-gradient(#e27e22 0 1px, #38271a 1px); margin: 16px 0 4px; }
.ticks { height: 115px; margin: 5px 2px 0 3px; background: repeating-linear-gradient(#ccc 0 1px, transparent 1px 10%); }
.lv { display: flex; gap: 1px; margin-bottom: 4px; background: #232325; }
.lv i { flex: 1; }
.lv .l { background: linear-gradient(transparent 0 88px, #9be92d 88px 90px, transparent 90px 107px, #8df52a 107px, #2a9c22); }
.lv .r { background: linear-gradient(transparent 0 88px, #9be92d 88px 90px, transparent 90px 103px, #8df52a 103px, #2a9c22); }
.cols ul { display: flex; flex-direction: column; font-size: 9px; line-height: 11px; }
.cols li { flex: 1; display: flex; align-items: center; justify-content: space-between; padding: 0 3px 0 2px; }
.cols li::before { content: ""; width: 4px; height: 1px; background: #ccc; }
.cols .inf { flex: 0 0 11px; margin-top: 7px; }
.cols .inf::before { visibility: hidden; }

/* Arranger */
.centre { display: grid; grid-template-rows: 406px minmax(216px, 1fr); gap: 5px; min-width: 0; }
.arranger { display: grid; grid-template-columns: 181px minmax(0, 1fr); grid-template-rows: 26px 1fr 23px; overflow: hidden; }
.corner { display: flex; justify-content: flex-end; padding: 1px 3px 0 0; }
.corner button { width: 20px; height: 25px; background: #2b2b2b; }
.ruler { position: relative; background: #272727; margin-right: 1px; overflow: hidden; }
.nos { display: flex; height: 17px; background: repeating-linear-gradient(90deg, #4a4a4a 0 1px, transparent 1px 36px); overflow: hidden; font-size: 11px; }
.nos span { flex: 0 0 36px; padding-left: 3px; }
.loopbar { width: 397px; height: 7px; background: #c9bfce; }
.startmark { position: absolute; left: 7px; top: 3px; }
.heads, .lanes { display: grid; grid-template-rows: 40px 40px 1fr 40px 40px; background: #111; }
.track { display: grid; grid-template-columns: 1fr 18px 18px 18px 9px; grid-template-rows: 14px 15px; gap: 3px 4px; margin: 0 2px 1px 1px; padding: 4px 2px 3px 4px; background: #454547; border-left: 6px solid #ff4a12; align-items: center; }
.track button { height: 14px; font-size: 11px; line-height: 12px; }
.t-inst { background: #757275; }
.t-audio { border-color: #f9ae12; }
.t-bus { border-color: #8e8991; }
.tname { display: flex; align-items: center; gap: 5px; font-weight: 700; white-space: nowrap; overflow: hidden; }
.arm i { width: 8px; height: 8px; border-radius: 50%; background: #8a8a8a; }
.track .live { background: #f01020; }
.live i { background: #300; }
.vol { height: 15px; border: 2px solid #161616; }
.track .vol { grid-column: 1 / 4; }
.v52 { background: linear-gradient(90deg, #38271a 54%, #c98246 54% calc(54% + 1px), #171717 0); }
.v77 { background: linear-gradient(90deg, #38271a 78%, #f49a3c 78% calc(78% + 1px), #171717 0); }
.lvl { grid-column: 5; grid-row: 1 / 3; height: 100%; background: linear-gradient(90deg, #161616 45%, #333 45% 55%, #161616 55%); }
.lvl.hot { border-bottom: 5px dashed #4faf2e; }
.lanes { position: relative; margin-right: 1px; background: linear-gradient(90deg, #eadff0 397px, #d2c5d8 397px); overflow: hidden; }
.lanes::after { content: ""; position: absolute; inset: 0; background: repeating-linear-gradient(90deg, rgba(40,30,50,.3) 0 1px, transparent 1px 36px), repeating-linear-gradient(90deg, rgba(40,30,50,.13) 0 1px, transparent 1px 5px, rgba(40,30,50,.07) 5px 6px, transparent 6px 9px); }
.lane { border-bottom: 1px solid #aaa3ae; }
.gap { background: rgba(130, 138, 145, .55); }
.clip { position: relative; z-index: 1; width: 397px; height: 38px; margin-top: 1px; padding-left: 6px; background: #ff4500; border: 1px solid #7c3818; color: #7a2406; font-weight: 400; line-height: 20px; clip-path: polygon(7px 0, 100% 0, 100% 100%, 0 100%, 0 7px); }
.clip svg { width: 100%; height: 14px; }
.playhead { position: absolute; z-index: 2; left: 160px; top: 2px; bottom: 0; width: 1px; background: #332b36; }
.views { display: flex; align-items: center; gap: 2px; padding-left: 5px; }
.views button { width: 15px; height: 15px; background: #2d2d2d; color: #f58a1f; }
.views .plain { background: none; color: #fff; }
.views .gapl { margin-left: 6px; }
.scroller { display: flex; align-items: center; background: #303030; padding-right: 4px; }
.scroller button { width: 14px; height: 14px; background: #252525; }
.scroller i { flex: 1; height: 13px; background: #48484a; }
.snap { width: 75px; text-align: right; font-size: 12px; }
.scroller em { width: 21px; padding-left: 6px; font: 400 9px/14px "Open Sans", sans-serif; color: #777; }
.snapset { display: flex; gap: 4px; align-items: center; padding: 1px 3px; background: #1f1f1f; margin-left: 2px; }

/* Device rack */
.devices { display: flex; background: #141416; overflow: hidden; border-left: 0; }
.vert { writing-mode: vertical-rl; transform: rotate(180deg); text-align: right; white-space: nowrap; }
.outer { width: 26px; padding: 0 1px 6px 3px; line-height: 16px; background: #4a494b; border-right: 6px solid #ff4a12; }
.rack { flex: 1; display: flex; background: #151517; }
.slot { width: 21px; display: flex; flex-direction: column; align-items: center; padding: 14px 0 0; }
.slot .plus { margin: 76px 0 46px; }
.dot { width: 7px; height: 10px; background: #2a2a2c; border-radius: 4px; }
.plus { color: #8f8f8f; font-size: 16px; height: 12px; }
.io { width: 8px; height: 38px; background: linear-gradient(90deg, #242426 45%, #151517 45% 55%, #242426 55%); }
.io.hot { background: linear-gradient(90deg, transparent 42%, #1d2022 42% 58%, transparent 58%), linear-gradient(#242426 70%, #58d430 70%); }
.device { display: grid; grid-template-columns: 23px 155px 1fr; width: 320px; margin: 9px 0 9px; border: 1px dashed #9a9a9a; background: #1d2022; border-radius: 3px; }
.side { display: flex; flex-direction: column; align-items: center; gap: 7px; padding: 2px 0 5px 2px; background: #4a494c; }
.side .on { width: 14px; height: 15px; background: #ff7b0a; }
.side .vert { flex: 1; margin-top: -2px; }
.body { display: flex; flex-direction: column; background: #454547; }
.dbar { display: flex; align-items: center; height: 20px; gap: 6px; padding: 0 4px 0 1px; }
.find { flex: 1; display: flex; align-items: center; justify-content: space-between; height: 16px; margin-right: 1px; padding: 0 6px 0 4px; color: #aaa; background: #242426; }
.chains { flex: 1; display: flex; margin-right: 3px; padding-top: 1px; border-left: 1px solid #111; background: #111; }
.list { flex: 1; }
.chain { display: grid; grid-template-columns: 11px 62px 20px 20px 9px; grid-template-rows: 15px 15px; gap: 2px 3px; height: 38px; margin-bottom: 2px; padding: 3px 2px 3px 4px; background: #424244; border-left: 6px solid #ff4a12; align-items: center; white-space: nowrap; font-weight: 700; }
.chain.cur { background: #777477; }
.chain span { grid-column: 2 / 4; padding-left: 2px; }
.chain .vol { grid-column: 1 / 3; }
.chain button { height: 15px; line-height: 12px; font-size: 11px; }
.chain .k { justify-self: center; }
.lvl2 { grid-column: 5; grid-row: 1 / 3; height: 100%; background: linear-gradient(90deg, #1a1a1a 4px, #444 4px 5px, #1a1a1a 5px); }
.lvl2.hot { background: linear-gradient(90deg, transparent 4px, #1a1a1a 4px 5px, transparent 5px), linear-gradient(#1a1a1a 20px, #58d430 20px 22px, #1a1a1a 22px 23px, #58d430 23px); }
.lvl2.mid { background: linear-gradient(90deg, transparent 4px, #1a1a1a 4px 5px, transparent 5px), linear-gradient(#1a1a1a 17px, #5c5c5e 17px); }
.sbar { width: 5px; height: 137px; background: #8e8c90; }
.tail { width: 20px; display: flex; flex-direction: column; align-items: center; justify-content: flex-end; gap: 45px; padding-bottom: 8px; }
.ends { flex: 1; display: flex; flex-direction: column; align-items: flex-end; justify-content: space-between; padding: 14px 0 14px; }
.ends i { width: 5px; height: 10px; background: #333; border-radius: 5px 0 0 5px; }

/* Browser */
.browser { display: flex; flex-direction: column; }
.browser h2 { padding: 0 4px; line-height: 16px; height: 17px; white-space: nowrap; }
.browser nav { display: flex; justify-content: space-between; align-items: center; height: 22px; padding: 0 7px 0 6px; }
.browser nav button { width: 20px; height: 19px; color: #f3e9ee; }
.browser nav .cur { background: #2a2522; color: #f57c12; }
.query { display: flex; align-items: center; gap: 3px; height: 17px; padding: 0 8px 0 5px; background: #19191a; border-bottom: 1px solid #333; }
.query input { flex: 1; min-width: 0; height: 15px; font-size: 11px; }
.tree { height: 228px; padding: 4px 8px 0 2px; background: #151517; border-top: 2px solid #505050; border-bottom: 2px solid #505050; }
.tree li { display: flex; align-items: center; gap: 3px; height: 17px; padding-left: 3px; }
.tree .n1 { padding-left: 4px; gap: 4px; }
.tree .open { margin-right: 3px; }
.tree .cur { padding-left: 24px; background: #59575c; border: 1px solid #aaa4ad; color: #1c1a1e; }
.blank { flex: 1; background: #151517; }
.meta { height: 90px; padding: 5px 8px 0 6px; background: #151517; border-top: 2px solid #505050; line-height: 15px; }
.meta hr { height: 1px; margin: 1px 0 2px; border: 0; background: #333; }

/* Footer */
.foot { display: flex; align-items: center; height: 27px; padding: 0 8px 2px; gap: 14px; font-weight: 700; }
.foot > i { width: 2px; height: 13px; background: #777; }
.foot nav { display: flex; gap: 14px; font-size: 10px; }
.hi { color: #f57c12; }
.fi { display: flex; gap: 16px; align-items: center; }
.fr { margin-left: auto; display: flex; gap: 18px; align-items: center; }

/* Floating layers */
.mark { position: absolute; right: 9px; bottom: 19px; width: 110px; pointer-events: none; }
.mark svg { margin-left: 4px; }
.mark p { margin-top: -7px; margin-left: 4px; font: 300 35px/36px Lato, sans-serif; color: #858585; }
.mark b { font-weight: 700; }
.popup { position: absolute; z-index: 5; left: 399px; top: 308px; width: 427px; padding: 3px 0 0; background: #232323; border: 1px solid #111; font-size: 12px; font-weight: 600; }
.popup h4 { display: flex; align-items: center; gap: 8px; height: 19px; padding: 0 9px 0 8px; font-weight: 700; }
.popup h4::after { content: ""; flex: 1; height: 1px; background: #99938f; }
.items { display: grid; grid-template-columns: 144px 160px 1fr; }
.items:first-of-type { padding-bottom: 1px; }
.items button { justify-content: flex-start; gap: 6px; height: 17px; padding-left: 8px; white-space: nowrap; line-height: 17px; }
.items button:nth-child(3n+1) { padding-left: 7px; }
.items button:nth-child(3n+2) { padding-left: 9px; }
.items svg { width: 13px; height: 13px; }
.items .cur { background: #f2e6f7; color: #2e2a30; }
.more { width: 100%; height: 29px; padding-left: 18px; }
.cursor { position: absolute; z-index: 6; left: 605px; top: 372px; }
```
